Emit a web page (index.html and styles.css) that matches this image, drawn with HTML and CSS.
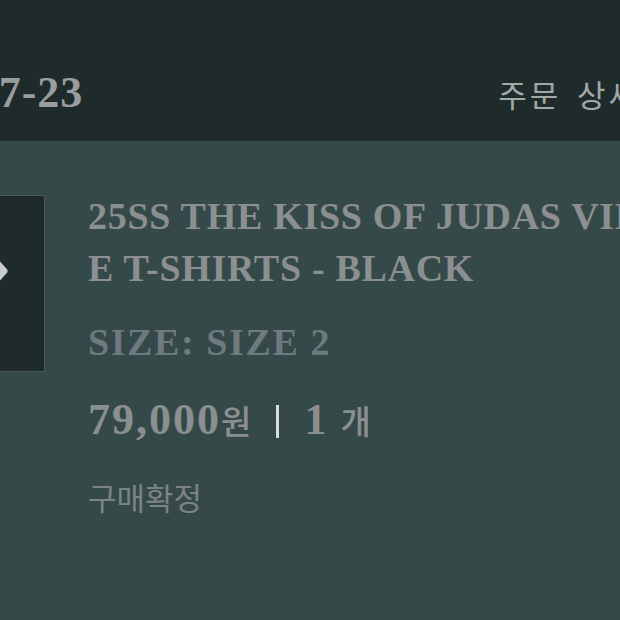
FILE: index.html
```html
<!DOCTYPE html>
<html lang="ko">
<head>
    <title>주문 내역</title>
    <link rel="stylesheet" href="styles.css">
</head>
<body>

<div class="page">
    <header class="order-head">
        <span class="order-date">2025-07-23</span>
        <a href="#" class="order-link">주문 상세</a>
    </header>

    <section class="order-item">
        <div class="thumb">
            <svg class="thumb-arrow" viewBox="0 0 177 177" width="177" height="177">
                <polyline points="124,63 135,75 124,87" fill="none" stroke="#c8cccc" stroke-width="7" stroke-linecap="round" stroke-linejoin="round"/>
            </svg>
        </div>

        <div class="item-info">
            <div class="item-title">25SS THE KISS OF JUDAS VINTAGE T-SHIRTS - BLACK</div>
            <div class="item-option">SIZE: SIZE 2</div>
            <div class="item-price">
                <span>79,000<span class="unit">원</span></span>
                <span class="divider"></span>
                <span class="qty">1<span class="unit">개</span></span>
            </div>
            <div class="item-status">구매확정</div>
        </div>
    </section>
</div>

</body>
</html>
```

FILE: styles.css
```css
html, body {
    overflow: hidden;
}

body {
    margin: 0;
    padding: 0;
    background-color: #354948;
    font-family: "Liberation Serif", "Noto Sans CJK KR", serif;
}

.page {
    width: 772px;
    margin-left: -132px;
}

.order-head {
    display: flex;
    justify-content: space-between;
    align-items: baseline;
    height: 141px;
    box-sizing: border-box;
    padding-top: 67px;
    background-color: #1f2a2b;
}

.order-date {
    font-size: 44px;
    font-weight: bold;
    line-height: 52px;
    letter-spacing: 1px;
    color: #9a9d9f;
}

.order-link {
    font-family: "Noto Sans CJK KR", sans-serif;
    font-size: 31px;
    letter-spacing: 3px;
    word-spacing: 4px;
    color: #a3a7a8;
    text-decoration: none;
}

.order-item {
    display: flex;
    align-items: flex-start;
    gap: 43px;
    padding-top: 54px;
}

.thumb {
    width: 177px;
    height: 177px;
    flex-shrink: 0;
    box-sizing: border-box;
    background-color: #1f2b2b;
    border: 1px solid #465a5a;
}

.thumb-arrow {
    display: block;
}

.item-info {
    width: 660px;
    flex-shrink: 0;
    margin-top: -5px;
}

.item-title {
    font-size: 38px;
    font-weight: bold;
    line-height: 52px;
    letter-spacing: 0.7px;
    color: #8c8f91;
    word-break: break-all;
}

.item-option {
    margin-top: 22px;
    font-size: 38px;
    font-weight: bold;
    line-height: 52px;
    letter-spacing: 1.6px;
    color: #6e7a80;
}

.item-price {
    display: flex;
    align-items: baseline;
    gap: 25px;
    margin-top: 26px;
    font-size: 44px;
    font-weight: bold;
    line-height: 52px;
    letter-spacing: 2px;
    color: #8c8f91;
}

.item-price .unit {
    font-family: "Noto Sans CJK KR", sans-serif;
    font-size: 33px;
    font-weight: 500;
    letter-spacing: 0;
}

.qty .unit {
    margin-left: 12px;
}

.divider {
    width: 3px;
    height: 33px;
    margin-top: 11px;
    background-color: #d8dede;
    align-self: flex-start;
}

.item-status {
    margin-top: 31px;
    font-family: "Noto Sans CJK KR", sans-serif;
    font-size: 31px;
    line-height: 40px;
    color: #7b8385;
}
```
